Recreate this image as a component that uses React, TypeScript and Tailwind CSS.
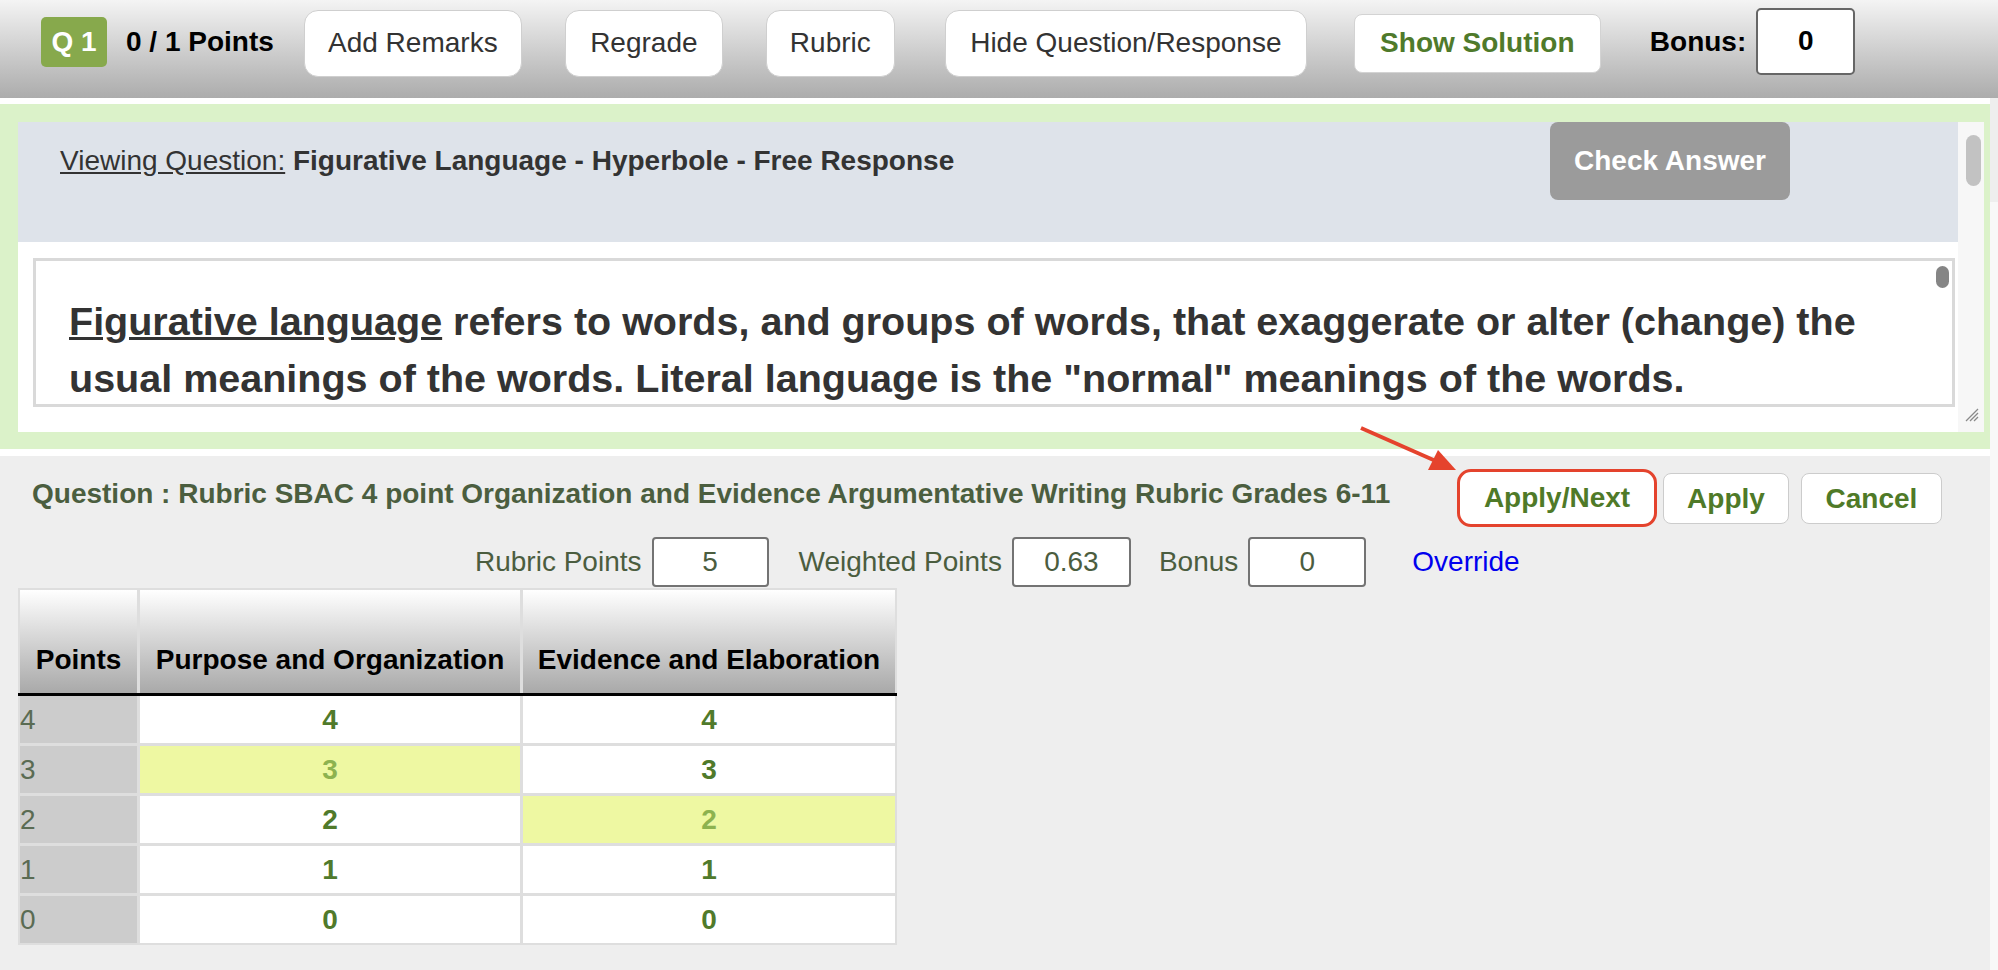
import React from "react";

function Btn({ cls, children }: { cls: string; children: React.ReactNode }) {
  return (
    <div
      className={
        "h-[67px] bg-white border border-[#cfcfcf] rounded-[14px] text-[#333333] flex items-center justify-center whitespace-nowrap " +
        cls
      }
    >
      {children}
    </div>
  );
}

function Field({ cls, value }: { cls: string; value: string }) {
  return (
    <div
      className={
        "h-[50px] bg-white border-2 border-[#737373] rounded-[4px] flex items-center justify-center text-[#4b5d3f] " +
        cls
      }
    >
      {value}
    </div>
  );
}

const rows = [
  { p: "4", a: "4", b: "4", ha: false, hb: false },
  { p: "3", a: "3", b: "3", ha: true, hb: false },
  { p: "2", a: "2", b: "2", ha: false, hb: true },
  { p: "1", a: "1", b: "1", ha: false, hb: false },
  { p: "0", a: "0", b: "0", ha: false, hb: false },
];

export default function App() {
  return (
    <div className="relative w-[1998px] h-[970px] overflow-hidden bg-[#eeeeee] font-['Liberation_Sans',Arial,sans-serif] text-[28px] leading-[32px]">
      {/* Toolbar */}
      <div className="h-[98px] bg-gradient-to-b from-[#f4f4f4] to-[#acacac]">
        <div className="flex items-center h-[86px]">
          <div className="ml-[41px] w-[66px] h-[50px] -mt-[3px] rounded-[5px] bg-[#87a94c] text-white font-bold flex items-center justify-center">
            Q 1
          </div>
          <div className="ml-[19px] -mt-[2px] font-bold text-black whitespace-nowrap">0 / 1 Points</div>
          <Btn cls="ml-[30px] w-[218px]">Add Remarks</Btn>
          <Btn cls="ml-[43px] w-[158px]">Regrade</Btn>
          <Btn cls="ml-[43px] w-[129px]">Rubric</Btn>
          <Btn cls="ml-[50px] w-[362px]">Hide Question/Response</Btn>
          <div className="ml-[47px] w-[247px] h-[59px] bg-white border border-[#d3d3d3] rounded-[8px] flex items-center justify-center font-bold text-[#4f7a2b] whitespace-nowrap">
            Show Solution
          </div>
          <div className="ml-[49px] -mt-[3px] font-bold text-black">Bonus:</div>
          <div className="ml-[10px] -mt-[4px] w-[99px] h-[67px] bg-white border-2 border-[#666666] rounded-[5px] flex items-center justify-center font-bold text-black">
            0
          </div>
        </div>
      </div>

      <div className="flex">
        <div className="w-[1990px]">
          <div className="h-[6px] bg-white" />
          {/* Green question panel */}
          <div className="h-[345px] bg-[#dbf2c9] pt-[18px] pl-[18px]">
            <div className="flex w-[1966px] h-[310px] bg-white">
              <div className="w-[1940px] flex flex-col">
                <div className="h-[120px] bg-[#dee3ea] flex items-start">
                  <div className="ml-[42px] mt-[23px] text-[#333333] whitespace-nowrap">
                    <span className="underline">Viewing Question:</span>{" "}
                    <span className="font-bold">Figurative Language - Hyperbole - Free Response</span>
                  </div>
                  <div className="ml-auto mr-[168px] w-[240px] h-[78px] rounded-[8px] bg-[#9b9b9b] text-white font-bold flex items-center justify-center whitespace-nowrap">
                    Check Answer
                  </div>
                </div>
                <div className="relative ml-[15px] mt-[16px] w-[1922px] h-[149px] border-[3px] border-[#d9d9d9] overflow-hidden bg-white">
                  <div className="pl-[33px] pt-[32px] w-[1880px] font-bold text-[39.5px] leading-[57px] text-[#333333]">
                    <span className="underline">Figurative language</span> refers to words, and groups of words, that
                    exaggerate or alter (change) the usual meanings of the words. Literal language is the "normal"
                    meanings of the words.
                  </div>
                  <div className="absolute right-[3px] top-[5px] w-[13px] h-[22px] rounded-full bg-[#858585]" />
                </div>
              </div>
              <div className="relative w-[26px] bg-[#f7f7f7]">
                <div className="mt-[13px] ml-[8px] w-[15px] h-[51px] rounded-full bg-[#c2c2c2]" />
                <svg className="absolute left-[5px] bottom-[10px]" width="16" height="16" viewBox="0 0 16 16">
                  <line x1="15" y1="3" x2="3" y2="15" stroke="#8a8a8a" strokeWidth="1.3" />
                  <line x1="15" y1="7" x2="7" y2="15" stroke="#8a8a8a" strokeWidth="1.3" />
                  <line x1="15" y1="11" x2="11" y2="15" stroke="#8a8a8a" strokeWidth="1.3" />
                </svg>
              </div>
            </div>
          </div>
          <div className="h-[7px] bg-white" />

          {/* Rubric header row */}
          <div className="flex items-start pt-[13px]">
            <div className="w-[1457px] pl-[32px] mt-[9px] font-bold text-[#4b5e3f] whitespace-nowrap">
              Question : Rubric SBAC 4 point Organization and Evidence Argumentative Writing Rubric Grades 6-11
            </div>
            <div className="w-[200px] h-[58px] bg-white border-[3px] border-[#e4432d] rounded-[14px] flex items-center justify-center font-bold text-[#4f7a28] whitespace-nowrap">
              Apply/Next
            </div>
            <div className="ml-[6px] mt-[4px] w-[126px] h-[51px] bg-white border border-[#cccccc] rounded-[8px] flex items-center justify-center font-bold text-[#4f7a28]">
              Apply
            </div>
            <div className="ml-[12px] mt-[4px] w-[141px] h-[51px] bg-white border border-[#cccccc] rounded-[8px] flex items-center justify-center font-bold text-[#4f7a28]">
              Cancel
            </div>
          </div>

          {/* Points row */}
          <div className="flex items-center mt-[10px] h-[50px] text-[#4b5d3f] whitespace-nowrap">
            <div className="ml-[475px]">Rubric Points</div>
            <Field cls="ml-[10px] w-[117px]" value="5" />
            <div className="ml-[30px]">Weighted Points</div>
            <Field cls="ml-[10px] w-[119px]" value="0.63" />
            <div className="ml-[28px]">Bonus</div>
            <Field cls="ml-[10px] w-[118px]" value="0" />
            <div className="ml-[46px] text-[#0000ee]">Override</div>
          </div>

          {/* Rubric table */}
          <div className="mt-[1px] ml-[18px] w-[879px] bg-[#dedede] p-[2px]">
            <div className="grid grid-cols-[117px_380px_372px] gap-x-[3px] h-[103px]">
              {["Points", "Purpose and Organization", "Evidence and Elaboration"].map((h) => (
                <div
                  key={h}
                  className="bg-gradient-to-b from-[#ffffff] to-[#a9a9a9] flex items-end justify-center pb-[17px] font-bold text-black whitespace-nowrap"
                >
                  {h}
                </div>
              ))}
            </div>
            <div className="h-[3px] bg-black -mx-[2px]" />
            <div className="flex flex-col gap-y-[3px]">
              {rows.map((r) => (
                <div key={r.p} className="grid grid-cols-[117px_380px_372px] gap-x-[3px] h-[47px]">
                  <div className="bg-[#cccccc] flex items-center text-[#5a6b53]">{r.p}</div>
                  <div
                    className={
                      r.ha
                        ? "bg-[#eef8a2] flex items-center justify-center font-bold text-[#8db24f]"
                        : "bg-white flex items-center justify-center font-bold text-[#507a2b]"
                    }
                  >
                    {r.a}
                  </div>
                  <div
                    className={
                      r.hb
                        ? "bg-[#eef8a2] flex items-center justify-center font-bold text-[#8db24f]"
                        : "bg-white flex items-center justify-center font-bold text-[#507a2b]"
                    }
                  >
                    {r.b}
                  </div>
                </div>
              ))}
            </div>
          </div>
        </div>
        <div className="w-[8px] mt-[104px] h-[866px] bg-[#f8f8f8]" />
      </div>

      {/* Annotation arrow */}
      <svg className="absolute left-0 top-0 pointer-events-none" width="1998" height="970">
        <line x1="1361" y1="428" x2="1438" y2="462" stroke="#e5432d" strokeWidth="4" />
        <polygon points="1456,470 1428,470 1438,450" fill="#e5432d" />
      </svg>
    </div>
  );
}
